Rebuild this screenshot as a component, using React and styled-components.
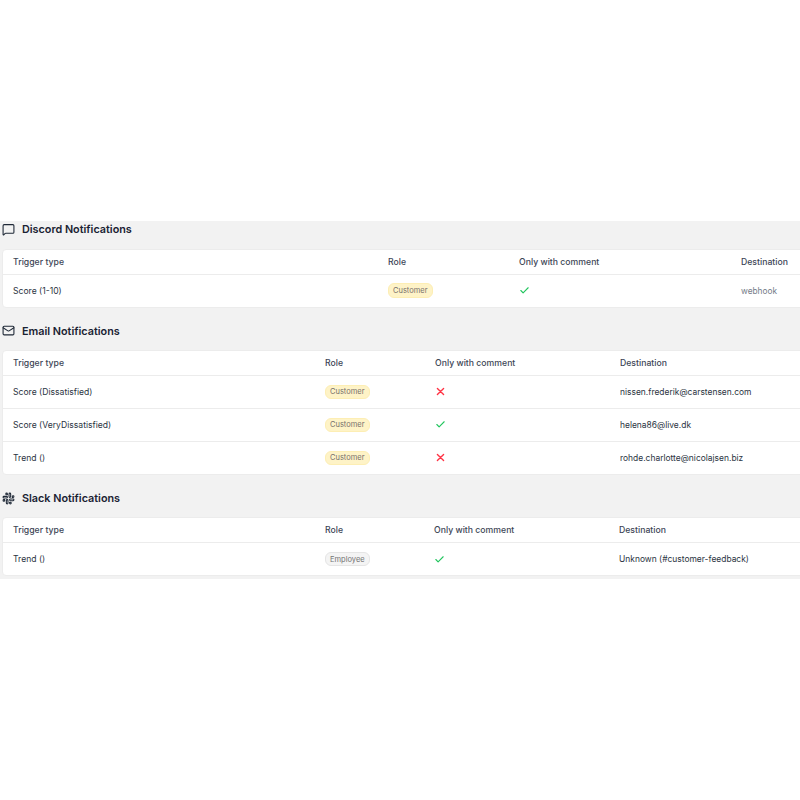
import styled, { createGlobalStyle } from "styled-components";
import { Check, Mail, MessageSquare, Slack } from "lucide-react";

const sections = [
  {
    title: "Discord Notifications",
    Icon: MessageSquare,
    columns: "375px 131px 222px 1fr",
    rows: [{ trigger: "Score (1-10)", role: "Customer", comment: true, destination: "webhook", muted: true }],
  },
  {
    title: "Email Notifications",
    Icon: Mail,
    columns: "312px 110px 185px 1fr",
    rows: [
      { trigger: "Score (Dissatisfied)", role: "Customer", comment: false, destination: "nissen.frederik@carstensen.com" },
      { trigger: "Score (VeryDissatisfied)", role: "Customer", comment: true, destination: "helena86@live.dk" },
      { trigger: "Trend ()", role: "Customer", comment: false, destination: "rohde.charlotte@nicolajsen.biz" },
    ],
  },
  {
    title: "Slack Notifications",
    Icon: Slack,
    columns: "312px 109px 185px 1fr",
    rows: [{ trigger: "Trend ()", role: "Employee", comment: true, destination: "Unknown (#customer-feedback)" }],
  },
];

function Cross() {
  return (
    <CrossIcon viewBox="0 0 11 11">
      <path d="M2.4 2.4 8.6 8.6M8.6 2.4 2.4 8.6" />
    </CrossIcon>
  );
}

export default function App() {
  return (
    <Page>
      <GlobalStyle />
      <Panel>
        {sections.map(({ title, Icon, columns, rows }) => (
          <Section key={title}>
            <Heading>
              <Icon size={13} strokeWidth={2} />
              <h2>{title}</h2>
            </Heading>
            <Card>
              <HeaderRow $columns={columns}>
                <span>Trigger type</span>
                <span>Role</span>
                <span>Only with comment</span>
                <span>Destination</span>
              </HeaderRow>
              {rows.map((row) => (
                <Row key={row.trigger} $columns={columns}>
                  <span>{row.trigger}</span>
                  <span>
                    <Badge $employee={row.role === "Employee"}>{row.role}</Badge>
                  </span>
                  <span>{row.comment ? <CheckMark size={11} strokeWidth={2.4} /> : <Cross />}</span>
                  <Destination $muted={row.muted}>{row.destination}</Destination>
                </Row>
              ))}
            </Card>
          </Section>
        ))}
      </Panel>
    </Page>
  );
}

const GlobalStyle = createGlobalStyle`
  body {
    margin: 0;
    background: #fff;
    font-family: Inter, "Liberation Sans", sans-serif;
    overflow: hidden;
  }
`;

const Page = styled.div`
  width: 800px;
  height: 800px;
  padding-top: 221px;
  box-sizing: border-box;
  overflow: hidden;
`;

const Panel = styled.div`
  display: flex;
  flex-direction: column;
  gap: 15px;
  padding: 0.4px 0 3px 2px;
  background: #f2f2f2;
`;

const Section = styled.section`
  display: flex;
  flex-direction: column;
  gap: 11px;
`;

const Heading = styled.div`
  display: flex;
  align-items: center;
  gap: 7px;
  height: 16.25px;
  color: #1f2937;

  h2 {
    margin: 0.6px 0 0;
    font-size: 10.8px;
    font-weight: 600;
    color: #1a2233;
  }
`;

const Card = styled.div`
  width: 820px;
  background: #fff;
  border: 1px solid #ececec;
  border-radius: 4px;
  box-sizing: border-box;
`;

const HeaderRow = styled.div`
  display: grid;
  grid-template-columns: ${(props) => props.$columns};
  align-items: center;
  height: 24px;
  padding-left: 10px;
  font-size: 8.7px;
  font-weight: 500;
  color: #3d4656;
`;

const Row = styled(HeaderRow)`
  height: 32px;
  border-top: 1px solid #ececec;
  font-size: 8.6px;
  font-weight: 400;
  color: #2b3442;

  span {
    display: flex;
    align-items: center;
  }
`;

const Badge = styled.span`
  padding: 0 4px;
  height: 12.5px;
  border: 1px solid ${(props) => (props.$employee ? "#e5e5e5" : "#fdeeb4")};
  border-radius: 6px;
  background: ${(props) => (props.$employee ? "#f4f4f4" : "#fef3c7")};
  font-size: 7.5px;
  color: ${(props) => (props.$employee ? "#737373" : "#78716c")};
`;

const CheckMark = styled(Check)`
  color: #22c55e;
`;

const CrossIcon = styled.svg`
  width: 11px;
  height: 11px;
  fill: none;
  stroke: #ff3344;
  stroke-width: 1.35;
  stroke-linecap: round;
`;

const Destination = styled.span`
  font-size: ${(props) => (props.$muted ? "8.3px" : "8.45px")};
  color: ${(props) => (props.$muted ? "#737b87" : "#2b3442")};
`;
